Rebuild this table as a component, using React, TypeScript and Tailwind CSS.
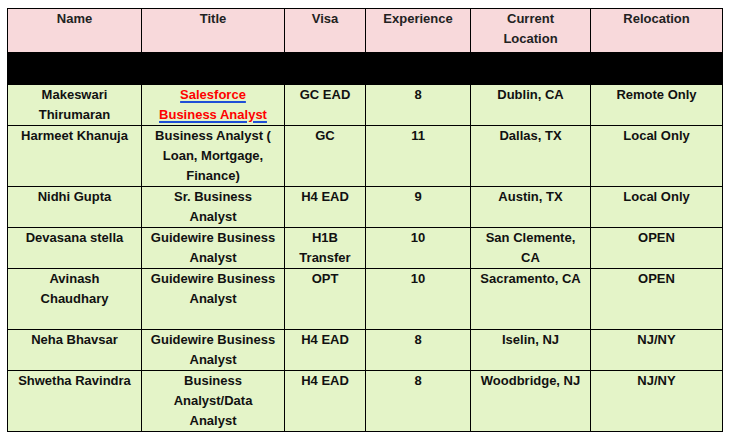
import React from 'react'

type Row = {
  name: string
  title: React.ReactNode
  visa: string
  exp: string
  loc: string
  reloc: string
  h: string
}

const rows: Row[] = [
  {
    name: 'Makeswari Thirumaran',
    title: (
      <span className="text-[#ff0000] underline decoration-[#1f4fd6] decoration-[1.5px] underline-offset-[2px]">
        Salesforce Business Analyst
      </span>
    ),
    visa: 'GC EAD',
    exp: '8',
    loc: 'Dublin, CA',
    reloc: 'Remote Only',
    h: 'h-[41px]',
  },
  {
    name: 'Harmeet Khanuja',
    title: 'Business Analyst ( Loan, Mortgage, Finance)',
    visa: 'GC',
    exp: '11',
    loc: 'Dallas, TX',
    reloc: 'Local Only',
    h: 'h-[61px]',
  },
  { name: 'Nidhi Gupta', title: 'Sr. Business Analyst', visa: 'H4 EAD', exp: '9', loc: 'Austin, TX', reloc: 'Local Only', h: 'h-[41px]' },
  { name: 'Devasana stella', title: 'Guidewire Business Analyst', visa: 'H1B Transfer', exp: '10', loc: 'San Clemente, CA', reloc: 'OPEN', h: 'h-[41px]' },
  { name: 'Avinash Chaudhary', title: 'Guidewire Business Analyst', visa: 'OPT', exp: '10', loc: 'Sacramento, CA', reloc: 'OPEN', h: 'h-[61px]' },
  { name: 'Neha Bhavsar', title: 'Guidewire Business Analyst', visa: 'H4 EAD', exp: '8', loc: 'Iselin, NJ', reloc: 'NJ/NY', h: 'h-[41px]' },
  { name: 'Shwetha Ravindra', title: 'Business Analyst/Data Analyst', visa: 'H4 EAD', exp: '8', loc: 'Woodbridge, NJ', reloc: 'NJ/NY', h: 'h-[60px]' },
]

const cell = 'border border-black px-[8px] py-0 align-top text-center leading-[20px]'

export default function App() {
  return (
    <div className="w-[733px] h-[432px] overflow-hidden bg-white pt-[8px] pl-[7px] font-['Liberation_Sans',Arial,sans-serif] text-[13px] font-bold">
      <table className="table-fixed border-collapse w-[715px]">
        <colgroup>
          <col className="w-[134px]" />
          <col className="w-[143px]" />
          <col className="w-[81px]" />
          <col className="w-[105px]" />
          <col className="w-[120px]" />
          <col className="w-[132px]" />
        </colgroup>
        <thead>
          <tr className="h-[44px] bg-[#f8d9db] text-[#222]">
            <th className={cell}>Name</th>
            <th className={cell}>Title</th>
            <th className={cell}>Visa</th>
            <th className={cell}>Experience</th>
            <th className={cell}>Current Location</th>
            <th className={cell}>Relocation</th>
          </tr>
        </thead>
        <tbody className="text-[#111]">
          <tr className="h-[32px] bg-black">
            <td colSpan={6} className="border border-black" />
          </tr>
          {rows.map(r => (
            <tr key={r.name} className={`${r.h} bg-[#e4f4c8]`}>
              <td className={cell}>{r.name}</td>
              <td className={cell}>{r.title}</td>
              <td className={cell}>{r.visa}</td>
              <td className={cell}>{r.exp}</td>
              <td className={cell}>{r.loc}</td>
              <td className={cell}>{r.reloc}</td>
            </tr>
          ))}
        </tbody>
      </table>
    </div>
  )
}
